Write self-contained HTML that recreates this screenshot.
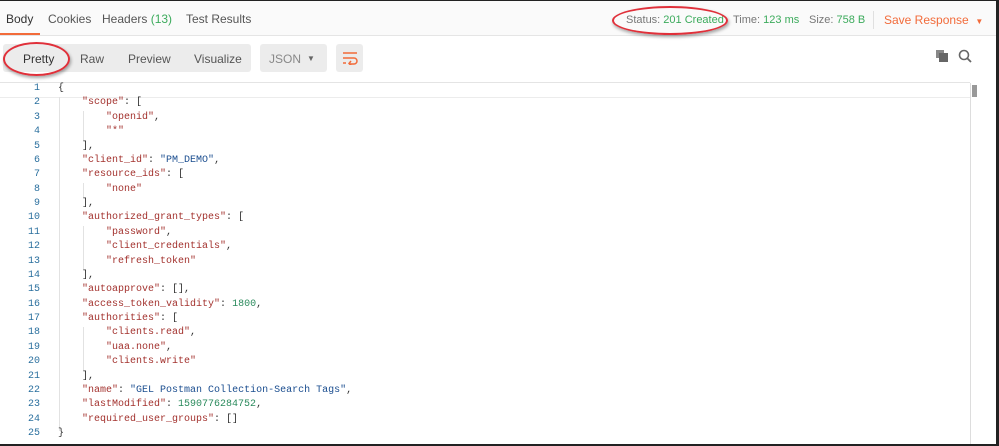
<!DOCTYPE html>
<html><head><style>
body{margin:0;width:999px;height:446px;overflow:hidden;background:#222;font-family:"Liberation Sans",sans-serif;}
#f{position:absolute;left:0;top:1px;width:996px;height:443px;background:#fff;overflow:hidden}
.tabs{position:absolute;left:0;top:0;width:996px;height:34px;background:#fafafa;border-bottom:1px solid #e5e5e5}
.t{position:absolute;top:11px;font-size:12px;color:#555}
.seg{position:absolute;top:43px;height:28px;background:#ececec;border-radius:3px}
.b{position:absolute;top:51px;font-size:12px;color:#555}
.code{position:absolute;left:0;top:81px;width:970px;height:362px;border-top:1px solid #e4e4e4}
.ln{position:absolute;left:0;width:40px;text-align:right;font:10px "Liberation Mono",monospace;color:#2a6f9e}
.cl{position:absolute;left:58px;font:10px "Liberation Mono",monospace;color:#333;white-space:pre}
.k{color:#a3322e}.s{color:#1a4d8f}.n{color:#2a8a5c}
.g{position:absolute;width:1px;background:#e2e2e2}
.ell{position:absolute;border:2px solid #e0303a;border-radius:50%;box-shadow:1px 2px 3px rgba(0,0,0,.35)}
</style></head><body><div id="f">
<div class="tabs">
<span class="t" style="left:6px;color:#333">Body</span>
<div style="position:absolute;left:0;top:32px;width:40px;height:2px;background:#f26b3a"></div>
<span class="t" style="left:48px">Cookies</span>
<span class="t" style="left:102px">Headers <span style="color:#3cab5c">(13)</span></span>
<span class="t" style="left:186px">Test Results</span>
<span class="t" style="left:626px;top:13px;font-size:11px;color:#777">Status: <span style="color:#3cab5c">201 Created</span></span>
<span class="t" style="left:733px;top:13px;font-size:11px;color:#777">Time: <span style="color:#3cab5c">123 ms</span></span>
<span class="t" style="left:809px;top:13px;font-size:11px;color:#777">Size: <span style="color:#3cab5c">758 B</span></span>
<div style="position:absolute;left:873px;top:10px;width:1px;height:18px;background:#e0e0e0"></div>
<span class="t" style="left:884px;top:12px;color:#f26b3a">Save Response &nbsp;<span style="font-size:8px">▼</span></span>
</div>
<div class="seg" style="left:3px;width:248px"></div>
<span class="b" style="left:23px;color:#333">Pretty</span>
<span class="b" style="left:80px">Raw</span>
<span class="b" style="left:128px">Preview</span>
<span class="b" style="left:194px">Visualize</span>
<div class="seg" style="left:260px;width:67px"></div>
<span class="b" style="left:269px;color:#888">JSON</span>
<span class="b" style="left:307px;font-size:8px;top:53px;color:#666">▼</span>
<div class="seg" style="left:336px;width:27px"></div>
<svg style="position:absolute;left:342px;top:50px" width="16" height="14"><path d="M1 2H15M1 7H12a3 3 0 0 1 0 6H7M1 12H4M9 10l-2 2.5 2 2" stroke="#f26b3a" stroke-width="1.5" fill="none"/></svg>
<svg style="position:absolute;left:935px;top:48px" width="14" height="14"><rect x="1" y="1" width="8" height="8" fill="#888"/><rect x="4" y="4" width="9" height="9" fill="#666"/></svg>
<svg style="position:absolute;left:958px;top:48px" width="14" height="14"><circle cx="6" cy="6" r="4.5" stroke="#666" stroke-width="1.6" fill="none"/><path d="M9.5 9.5L13 13" stroke="#666" stroke-width="1.8"/></svg>
<div class="code">
<div style="position:absolute;left:0;top:0;width:970px;height:14px;border-bottom:1px solid #ececec"></div>
<div style="position:absolute;left:970px;top:0;width:1px;height:362px;background:#ddd"></div>
<div style="position:absolute;left:972px;top:2px;width:5px;height:12px;background:#999"></div>
</div>
<div class="g" style="left:59px;top:96px;height:334px"></div>
<div class="g" style="left:83px;top:110px;height:30px"></div>
<div class="g" style="left:83px;top:182px;height:15px"></div>
<div class="g" style="left:83px;top:225px;height:44px"></div>
<div class="g" style="left:83px;top:326px;height:44px"></div>
<div id="c"></div>
<div class="ell" style="left:3px;top:41px;width:63px;height:30px"></div>
<div class="ell" style="left:612px;top:5px;width:112px;height:25px"></div>
</div>
<script>
var L=['{','    <span class=k>"scope"</span>: [','        <span class=k>"openid"</span>,','        <span class=k>"*"</span>','    ],','    <span class=k>"client_id"</span>: <span class=s>"PM_DEMO"</span>,','    <span class=k>"resource_ids"</span>: [','        <span class=k>"none"</span>','    ],','    <span class=k>"authorized_grant_types"</span>: [','        <span class=k>"password"</span>,','        <span class=k>"client_credentials"</span>,','        <span class=k>"refresh_token"</span>','    ],','    <span class=k>"autoapprove"</span>: [],','    <span class=k>"access_token_validity"</span>: <span class=n>1800</span>,','    <span class=k>"authorities"</span>: [','        <span class=k>"clients.read"</span>,','        <span class=k>"uaa.none"</span>,','        <span class=k>"clients.write"</span>','    ],','    <span class=k>"name"</span>: <span class=s>"GEL Postman Collection-Search Tags"</span>,','    <span class=k>"lastModified"</span>: <span class=n>1590776284752</span>,','    <span class=k>"required_user_groups"</span>: []','}'];
var h='';L.forEach(function(x,i){var y=82+i*14.375;h+='<div class=ln style="top:'+y+'px">'+(i+1)+'</div><div class=cl style="top:'+y+'px">'+x+'</div>';});
document.getElementById('c').innerHTML=h;
</script>
</body></html>
